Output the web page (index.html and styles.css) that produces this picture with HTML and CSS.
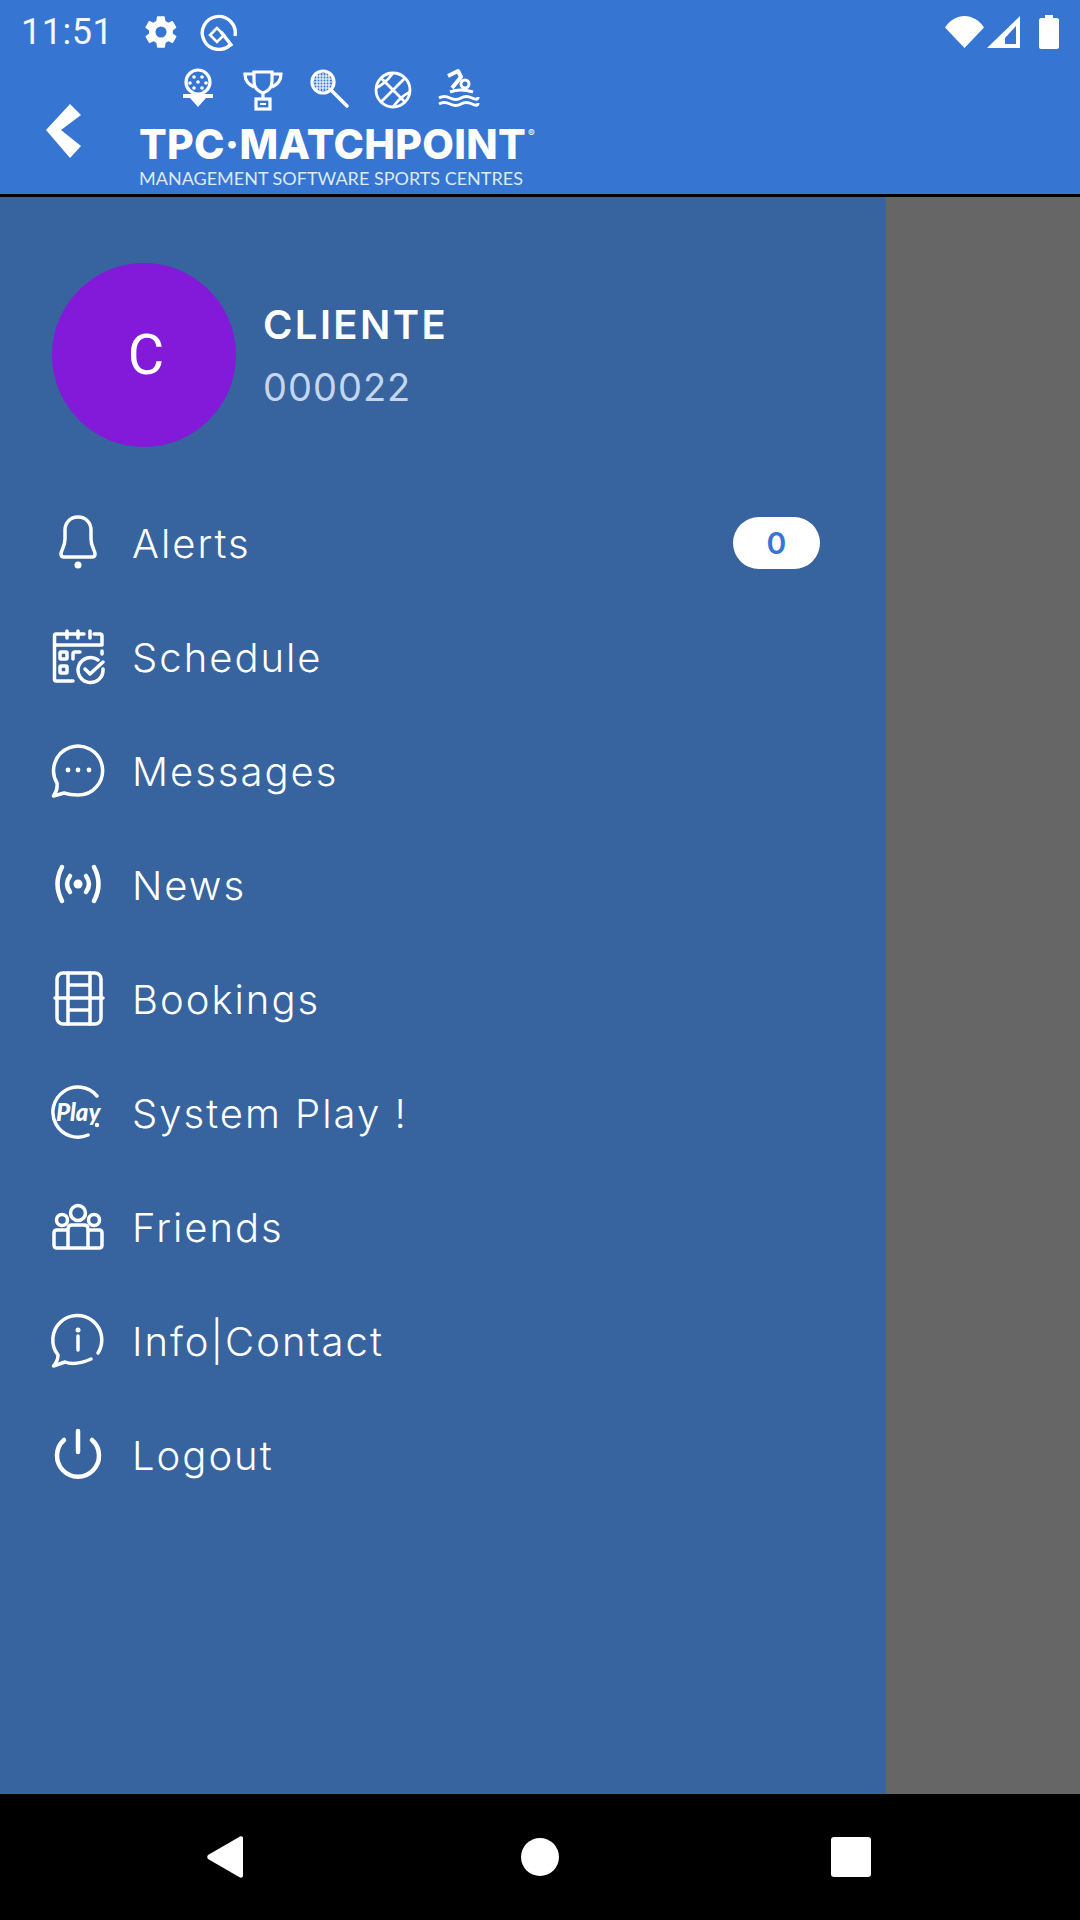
FILE: index.html
```html
<!DOCTYPE html>
<html lang="en">
<head>
  <meta charset="UTF-8">
  <title>TPC Matchpoint</title>
  <link rel="stylesheet" href="styles.css">
</head>

<body>

  <!-- Status bar + app bar -->
  <div id="top">
    <div id="status">
      <span class="time">11:51</span>
      <svg class="st-gear" viewBox="0 0 24 24"><path fill="#fff" d="M19.4 13c.1-.3.1-.7.1-1s0-.7-.1-1l2.100-1.600c.2-.2.2-.4.1-.6l-2-3.500c-.1-.2-.4-.3-.6-.2l-2.500 1c-.5-.4-1.100-.7-1.700-1l-.4-2.600c0-.2-.2-.4-.5-.4h-4c-.3 0-.5.2-.5.4l-.4 2.600c-.6.3-1.200.6-1.700 1l-2.500-1c-.2-.1-.5 0-.6.2l-2 3.500c-.1.2-.1.4.1.6L4.500 11c-.1.3-.1.7-.1 1s0 .7.1 1l-2.100 1.600c-.2.2-.2.4-.1.6l2 3.500c.1.2.4.3.6.2l2.500-1c.5.4 1.100.7 1.700 1l.4 2.600c0 .2.2.4.5.4h4c.3 0 .5-.2.5-.4l.4-2.600c.6-.3 1.200-.6 1.700-1l2.500 1c.2.100.5 0 .6-.2l2-3.500c.1-.2.1-.4-.1-.6L19.400 13zM12 15.500a3.500 3.500 0 1 1 0-7 3.500 3.500 0 0 1 0 7z"/></svg>
      <svg class="st-q" viewBox="0 0 38 38" fill="none" stroke="#fff" stroke-width="3.400"><path d="M31 31A16.500 16.500 0 1 1 35 23"/><path d="M17 15L10 22L17 29L24 22Z" stroke-width="2.600"/><path d="M21 19L32 33"/></svg>
      <div class="st-right">
        <svg class="st-wifi" viewBox="0 0 39 32"><path fill="#fff" d="M0 11.500C5 4 12 0 19.500 0S34 4 39 11.500L19.500 32Z"/></svg>
        <svg class="st-signal" viewBox="0 0 33 32"><path fill="#fff" fill-rule="evenodd" d="M33 0V32H0ZM29 10L18 22V28H29Z"/></svg>
        <svg class="st-batt" viewBox="0 0 20 34"><path fill="#fff" d="M6 0h8v3h4c1 0 2 1 2 2v27c0 1-1 2-2 2H2c-1 0-2-1-2-2V5c0-1 1-2 2-2h4z"/></svg>
      </div>
    </div>

    <div id="appbar">
      <svg class="back" viewBox="0 0 38 56"><path fill="#fff" d="M1 28L25 2L36 13L16 28L36 44L25 56Z"/></svg>
      <div class="logo">
        <div class="sports">
          <svg viewBox="0 0 44 44" fill="none" stroke="#fff" stroke-width="3.200"><circle cx="22" cy="14" r="12"/><g fill="#fff" stroke="none"><circle cx="18" cy="9" r="1.800"/><circle cx="26" cy="9" r="1.800"/><circle cx="14" cy="15" r="1.800"/><circle cx="22" cy="14" r="1.800"/><circle cx="30" cy="15" r="1.800"/><circle cx="18" cy="20" r="1.800"/><circle cx="26" cy="20" r="1.800"/><path d="M7 26H37V30H30L22 39L14 30H7Z"/></g></svg>
          <svg viewBox="0 0 44 44" fill="none" stroke="#fff" stroke-width="3.200"><path d="M13 4H31V13Q31 22 22 25Q13 22 13 13Z"/><path d="M13 6H4Q4 15 13 19M31 6H40Q40 15 31 19M22 25V31"/><rect x="15" y="31" width="14" height="10"/><path d="M19 36H25" stroke-width="2"/></svg>
          <svg viewBox="0 0 44 44" fill="none" stroke="#fff" stroke-width="3.200"><circle cx="17" cy="14" r="11"/><path d="M10 8H24M8 11H26M8 14H26M8 17H26M10 20H24M11 5V23M14 5V23M17 5V23M20 5V23M23 5V23" stroke-width="1.100"/><path d="M25 22L41 38" stroke-width="3.500" stroke-linecap="round"/></svg>
          <svg viewBox="0 0 44 44" fill="none" stroke="#fff" stroke-width="2.800"><circle cx="22" cy="22" r="17"/><path d="M10 10L34 34M34 10L10 34M22 5Q14 16 5 20M39 24Q30 28 22 39"/></svg>
          <svg viewBox="0 0 44 44" fill="none" stroke="#fff" stroke-width="3"><circle cx="29" cy="16" r="4" fill="none"/><path d="M12 8L22 3L25 9L16 20" stroke-width="4" stroke-linejoin="round"/><path d="M14 24Q24 20 37 24" stroke-width="3.200"/><path d="M3 30Q8 27 14 30T25 30T36 30T42 29M3 36Q8 33 14 36T25 36T36 36T42 35" stroke-width="3"/></svg>
        </div>
        <div class="word">TPC·MATCHPOINT<sup>®</sup></div>
        <div class="tagline">MANAGEMENT SOFTWARE SPORTS CENTRES</div>
      </div>
    </div>
  </div>

  <div id="main">
    <!-- Side drawer -->
    <div id="drawer">
      <div class="profile">
        <div class="avatar">C</div>
        <div>
          <div class="name">CLIENTE</div>
          <div class="code">000022</div>
        </div>
      </div>

      <div class="menu">
        <div class="row">
          <svg class="ico" viewBox="0 0 56 56"><path d="M28 2C20 2 15 8 15 15V24C15 32 11 35 11 39C11 41 12 42 14 42H42C44 42 45 41 45 39C45 35 41 32 41 24V15C41 8 36 2 28 2Z"/><circle class="dot" cx="28" cy="50" r="3.500"/></svg>
          <span class="label">Alerts</span>
          <span class="badge">0</span>
        </div>
        <div class="row">
          <svg class="ico" viewBox="0 0 56 56"><path d="M12 5H6Q4.500 5 4.500 7V50Q4.500 52 6 52H23M22 5H12M34 5H22M44 5H50Q52 5 52 7V16H4.500M52 22V25"/><path d="M17 2V9M28 2V9M40 2V9"/><rect x="10" y="23" width="7" height="7" rx="1"/><rect x="10" y="37" width="7" height="7" rx="1"/><path d="M23 30V25Q23 23 25 23H30"/><path d="M48 31A12.500 12.500 0 1 0 53 40"/><path d="M35 40L40 45L53 33"/></svg>
          <span class="label">Schedule</span>
        </div>
        <div class="row">
          <svg class="ico" viewBox="0 0 56 56"><path d="M3.500 53L14 50Q20 52 28 52A24.500 24.500 0 1 0 7 40Q8 47 3.500 53Z"/><circle class="dot" cx="18" cy="27" r="2.400"/><circle class="dot" cx="28" cy="27" r="2.400"/><circle class="dot" cx="39" cy="27" r="2.400"/></svg>
          <span class="label">Messages</span>
        </div>
        <div class="row">
          <svg class="ico thick" viewBox="0 0 56 56"><path d="M12 10Q3 27 12 44M44 10Q53 27 44 44M20 19Q14 27 20 35M36 19Q42 27 36 35"/><circle class="dot" cx="28" cy="27" r="4.500"/></svg>
          <span class="label">News</span>
        </div>
        <div class="row">
          <svg class="ico" viewBox="0 0 56 56"><rect x="7" y="2" width="44" height="51" rx="6"/><path d="M18 2V53M40 2V53M5 27H53M18 14H40M18 39H40"/></svg>
          <span class="label">Bookings</span>
        </div>
        <div class="row">
          <svg class="ico" viewBox="0 0 56 56"><path d="M47 11A25 25 0 1 0 38 50"/><circle class="dot" cx="47" cy="40" r="2.200"/><text class="play" x="6" y="36">Play</text></svg>
          <span class="label">System Play !</span>
        </div>
        <div class="row">
          <svg class="ico" viewBox="0 0 56 56"><circle cx="28" cy="14" r="7.500"/><circle cx="12" cy="21" r="5.500"/><circle cx="44" cy="21" r="5.500"/><path d="M18 31H7Q4 31 4 34V46Q4 49 7 49H49Q52 49 52 46V34Q52 31 49 31H38M18 49V30Q18 26 22 26H34Q38 26 38 30V49"/></svg>
          <span class="label">Friends</span>
        </div>
        <div class="row">
          <svg class="ico" viewBox="0 0 56 56"><path d="M48 40A24.500 24.500 0 1 0 8 42Q8 48 3.500 53L15 49Q25 53 41 46"/><circle class="dot" cx="28" cy="17" r="2.500"/><path d="M28 23V37"/></svg>
          <span class="label">Info|Contact</span>
        </div>
        <div class="row">
          <svg class="ico thick" viewBox="0 0 56 56"><path d="M14 13A21 21 0 1 0 42 13M28 4V25"/></svg>
          <span class="label">Logout</span>
        </div>
      </div>
    </div>
    <div id="scrim"></div>
  </div>

  <!-- Android nav bar -->
  <div id="navbar">
    <svg class="nav-back" viewBox="0 0 36 42"><path fill="#fff" d="M1 19L33 0.500C35 0 36 1 36 2V40C36 41 35 42 33 41.500L1 23C0 22 0 20 1 19Z"/></svg>
    <div class="nav-home"></div>
    <div class="nav-recent"></div>
  </div>

</body>
</html>
```

FILE: styles.css
```css
body {
  margin: 0;
  width: 1080px;
  height: 1920px;
  display: flex;
  flex-direction: column;
  overflow: hidden;
  font-family: Inter, sans-serif;
  color: white;
}

#top {
  height: 194px;
  background: #3676d2;
  border-bottom: 3px solid #000;
  flex: none;
}

#status {
  height: 64px;
  display: flex;
  align-items: center;
  padding: 0 21px;
}

.time {
  font-family: Roboto, sans-serif;
  font-size: 36px;
  letter-spacing: 0.5px;
  width: 121px;
  color: #f4f7fd;
}

.st-gear {
  width: 38px;
  height: 38px;
}

.st-q {
  width: 38px;
  height: 38px;
  margin-left: 20px;
}

.st-right {
  margin-left: auto;
  display: flex;
  align-items: center;
}

.st-wifi {
  width: 39px;
  height: 32px;
}

.st-signal {
  width: 33px;
  height: 32px;
  margin-left: 3px;
}

.st-batt {
  width: 20px;
  height: 34px;
  margin-left: 19px;
}

#appbar {
  display: flex;
  padding-left: 45px;
}

.back {
  width: 38px;
  height: 56px;
  margin-top: 38px;
}

.logo {
  margin-left: 56px;
}

.sports {
  display: flex;
  gap: 21px;
  padding-left: 37px;
  margin-top: 4px;
  height: 44px;
}

.sports svg {
  width: 44px;
  height: 44px;
}

.word {
  font-weight: 800;
  font-size: 41px;
  line-height: 42px;
  letter-spacing: 0.3px;
  margin-top: 11px;
  white-space: nowrap;
}

.word sup {
  font-size: 10px;
  font-weight: 400;
  letter-spacing: 0;
  vertical-align: 22px;
  line-height: 0;
  margin-left: 2px;
}

.tagline {
  font-family: Lato, sans-serif;
  font-size: 18px;
  line-height: 20px;
  margin-top: 3px;
  white-space: nowrap;
  color: #dfe9f8;
}

#main {
  flex: 1;
  display: flex;
  min-height: 0;
}

#drawer {
  width: 886px;
  background: #37639f;
  padding: 66px 0 0 50px;
  box-sizing: border-box;
}

#scrim {
  flex: 1;
  background: #666;
}

.profile {
  display: flex;
  align-items: center;
  gap: 27px;
  padding-left: 2px;
}

.avatar {
  width: 184px;
  height: 184px;
  border-radius: 50%;
  background: #831ad9;
  display: flex;
  align-items: center;
  justify-content: center;
  font-family: Roboto, sans-serif;
  font-size: 56px;
  padding-left: 4px;
  box-sizing: border-box;
}

.name {
  font-size: 40px;
  font-weight: 600;
  letter-spacing: 2.4px;
}

.code {
  font-size: 38px;
  font-weight: 400;
  letter-spacing: 1px;
  color: #c5d6ee;
  margin-top: 15px;
}

.menu {
  margin-top: 39px;
  padding-right: 66px;
}

.row {
  height: 114px;
  display: flex;
  align-items: center;
  gap: 26px;
}

.ico {
  width: 56px;
  height: 56px;
  fill: none;
  stroke: #fff;
  stroke-width: 3.500;
  stroke-linecap: round;
  stroke-linejoin: round;
  flex: none;
}

.ico.thick {
  stroke-width: 4.500;
}

.ico .dot {
  fill: #fff;
  stroke: none;
}

.play {
  fill: #fff;
  stroke: none;
  font-family: Lato, sans-serif;
  font-weight: 900;
  font-style: italic;
  font-size: 24px;
}

.label {
  font-size: 40px;
  font-weight: 300;
  letter-spacing: 2px;
}

.badge {
  margin-left: auto;
  width: 87px;
  height: 52px;
  border-radius: 26px;
  background: #fff;
  color: #3676d2;
  font-size: 30px;
  font-weight: 600;
  display: flex;
  align-items: center;
  justify-content: center;
}

#navbar {
  height: 126px;
  background: #000;
  flex: none;
  display: flex;
  align-items: center;
  padding-left: 207px;
}

.nav-back {
  width: 36px;
  height: 42px;
}

.nav-home {
  width: 38px;
  height: 38px;
  border-radius: 50%;
  background: #fff;
  margin-left: 278px;
}

.nav-recent {
  width: 40px;
  height: 40px;
  border-radius: 3px;
  background: #fff;
  margin-left: 272px;
}
```
